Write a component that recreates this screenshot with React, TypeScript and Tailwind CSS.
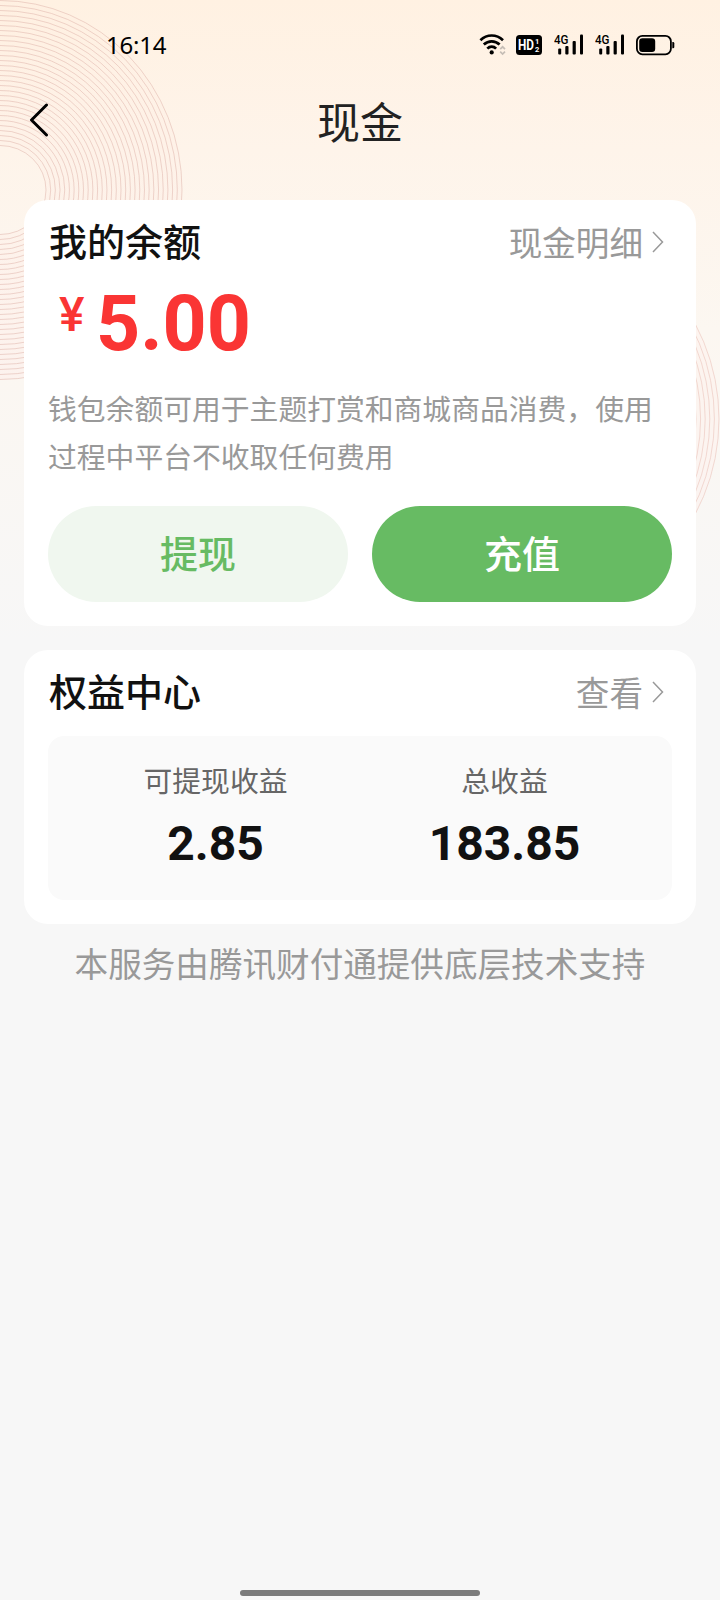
import React from "react";

const rings = Array.from({ length: 30 }, (_, i) => i);

function Backdrop() {
  return (
    <svg className="pointer-events-none absolute inset-0" width="720" height="640" viewBox="0 0 720 640" fill="none">
      <defs>
        <linearGradient id="ringGlow" x1="0" y1="0" x2="0" y2="1">
          <stop offset="0" stopColor="#ffe9dc" stopOpacity="0.1" />
          <stop offset="1" stopColor="#ffe9e6" stopOpacity="0.35" />
        </linearGradient>
      </defs>
      <path fillRule="evenodd" fill="url(#ringGlow)" d="M-182 190a182 189.5 0 1 0 364 0a182 189.5 0 1 0 -364 0zM-46 190a46 44.5 0 1 0 92 0a46 44.5 0 1 0 -92 0z" />
      <circle cx="517" cy="419" r="202" fill="#ffeeea" fillOpacity="0.35" />
      {rings.map((i) => (
        <ellipse key={i} cx="0" cy="190" rx={182 - i * 4.69} ry={189.5 - i * 5} stroke="#dfb5ab" strokeOpacity="0.6" strokeWidth="0.9" />
      ))}
      {rings.slice(0, 8).map((i) => (
        <circle key={i} cx="517" cy="419" r={202 - i * 4.6} stroke="#e8bdb4" strokeOpacity="0.6" strokeWidth="0.9" />
      ))}
    </svg>
  );
}

function Wifi() {
  return (
    <svg width="27" height="22" viewBox="0 0 27 22" fill="none">
      <path d="M1.400 6.200C8 -.1 17.400 -.1 24 6.200" stroke="#000" strokeWidth="2.700" />
      <path d="M4.800 10.600C9.400 6.200 16 6.200 20.600 10.600" stroke="#000" strokeWidth="2.700" />
      <path d="M8.300 14.600C10.800 12 14.600 12 17.100 14.600" stroke="#000" strokeWidth="2.700" />
      <circle cx="12.700" cy="18.400" r="2.100" fill="#000" />
      <path d="M21.200 15.200L23.600 12.800L26 15.200M21.200 17.700L23.600 20.100L26 17.700" stroke="#c5bdb5" strokeWidth="1.700" />
    </svg>
  );
}

function HdBadge() {
  return (
    <svg width="26" height="20" viewBox="0 0 26 20">
      <rect width="26" height="20" rx="3.500" fill="#000" />
      <g fill="#fff" fontFamily="Roboto, sans-serif" fontWeight="700">
        <text x="2" y="15.300" fontSize="15.500" textLength="16" lengthAdjust="spacingAndGlyphs">HD</text>
        <text x="19" y="8.500" fontSize="7.500">1</text>
        <text x="19" y="17.400" fontSize="7.500">2</text>
      </g>
    </svg>
  );
}

function Signal() {
  return (
    <svg width="30" height="30" viewBox="0 -4 30 30">
      <text x="0" y="10" fontSize="13" fontWeight="500" fontFamily="Roboto, sans-serif" textLength="14.500" lengthAdjust="spacingAndGlyphs">4G</text>
      <rect x="4.200" y="14.500" width="3" height="6" rx="1" />
      <rect x="11.300" y="12" width="3.200" height="8.500" rx="1" />
      <rect x="18.600" y="7" width="3.200" height="13.500" rx="1" />
      <rect x="26" y="0.500" width="3" height="20" rx="1" />
    </svg>
  );
}

function Battery() {
  return (
    <svg width="39" height="21" viewBox="0 0 39 21" fill="none">
      <rect x="0.900" y="0.900" width="34" height="18.400" rx="5.500" stroke="#000" strokeWidth="1.800" />
      <rect x="3.200" y="3.200" width="16" height="13.800" rx="3.200" fill="#000" />
      <path d="M36.300 7H37a1.300 1.300 0 0 1 1.300 1.300v3.700a1.300 1.300 0 0 1 -1.300 1.300h-.7z" fill="#000" />
    </svg>
  );
}

function Chevron() {
  return (
    <svg width="12" height="22" viewBox="0 0 12 22" fill="none">
      <path d="M1 1L10.500 11L1 21" stroke="#999" strokeWidth="1.500" />
    </svg>
  );
}

function CardHeader({ title, link }: { title: string; link: string }) {
  return (
    <div className="flex h-[84px] items-center justify-between pr-2">
      <h2 className="pt-[2px] pl-px text-[38px] leading-none font-medium text-[#111]">{title}</h2>
      <a className="flex items-center gap-[9px] text-[33.6px] leading-none text-[#999]">
        <span className="pt-[5px]">{link}</span>
        <Chevron />
      </a>
    </div>
  );
}

function Stat({ label, value }: { label: string; value: string }) {
  return (
    <div className="flex flex-1 flex-col items-center">
      <span className="text-[28.8px] leading-[44px] text-[#666]">{label}</span>
      <span className="mt-[10px] font-['Roboto'] text-[48px] leading-[60px] font-bold text-[#111]">{value}</span>
    </div>
  );
}

export default function App() {
  return (
    <div className="relative flex h-[1600px] w-[720px] flex-col overflow-hidden bg-[#f7f7f7] bg-[linear-gradient(to_bottom,#fff1e2_0px,#fef4ea_150px,#fcf7f1_330px,#f7f7f7_640px)] font-['Roboto','Noto_Sans_CJK_SC',sans-serif]">
      <Backdrop />
      <div className="relative flex h-[90px] items-center pl-[106px]">
        <span className="font-['Noto_Sans'] text-[24px] leading-none tracking-[-0.2px] text-black">16:14</span>
        <div className="ml-auto flex items-center pr-[45px]">
          <Wifi />
          <div className="ml-[10px]"><HdBadge /></div>
          <div className="ml-[12px]"><Signal /></div>
          <div className="ml-[11px]"><Signal /></div>
          <div className="ml-[11px]"><Battery /></div>
        </div>
      </div>
      <header className="relative grid h-[110px] grid-cols-[120px_1fr_120px] items-start pt-[10px]">
        <svg className="mt-[3px] ml-[29px]" width="21" height="34" viewBox="0 0 21 34" fill="none">
          <path d="M17.500 2L2.500 17L17.500 32" stroke="#000" strokeWidth="3" strokeLinecap="round" strokeLinejoin="round" />
        </svg>
        <h1 className="text-center text-[43px] leading-[48px] text-[#222]">现金</h1>
      </header>
      <main className="relative flex flex-col gap-6 px-6">
        <section className="h-[426px] rounded-[24px] bg-white px-6">
          <CardHeader title="我的余额" link="现金明细" />
          <div className="flex h-[93px] items-start pl-[11px] font-bold text-[#fa3534]">
            <span className="mt-[7px] w-[37px] text-[48px] leading-[48px] font-medium">¥</span>
            <span className="pt-px font-['Roboto'] text-[77px] leading-[78px]">5.00</span>
          </div>
          <p className="mt-[9px] text-[28.8px] leading-[48px] text-[#999]">钱包余额可用于主题打赏和商城商品消费，使用过程中平台不收取任何费用</p>
          <div className="mt-[24px] grid grid-cols-2 gap-6">
            <button className="h-24 rounded-full bg-[#f0f7ef] pt-px text-[38px] leading-none font-medium text-[#67bb63]">提现</button>
            <button className="h-24 rounded-full bg-[#67bb63] pt-px text-[38px] leading-none font-medium text-white">充值</button>
          </div>
        </section>
        <section className="h-[274px] rounded-[24px] bg-white px-6">
          <CardHeader title="权益中心" link="查看" />
          <div className="mt-[2px] flex h-[164px] rounded-[16px] bg-[#fafafa] px-[23px] pt-[24px]">
            <Stat label="可提现收益" value="2.85" />
            <Stat label="总收益" value="183.85" />
          </div>
        </section>
      </main>
      <p className="relative mt-[18px] text-center text-[33.6px] leading-[48px] text-[#999]">本服务由腾讯财付通提供底层技术支持</p>
      <div className="relative mx-auto mt-auto mb-1 h-[6px] w-60 rounded-full bg-[#7b7b7b]" />
    </div>
  );
}
